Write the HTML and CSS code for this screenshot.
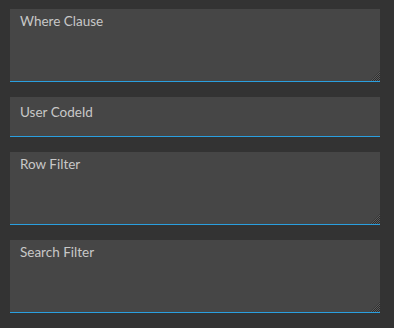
FILE: index.html
```html
<!DOCTYPE html>
<html lang="en">
<head>
    <meta charset="UTF-8">
    <meta name="viewport" content="width=device-width, initial-scale=1.0">
    <title>Filters</title>
    <link rel="stylesheet" href="styles.css">
</head>
<body>
    <div class="form">
        <div class="field area">
            <textarea id="whereClause" placeholder="Where Clause"></textarea>
        </div>
        <div class="field line">
            <input type="text" id="userCodeId" placeholder="User CodeId">
        </div>
        <div class="field area">
            <textarea id="rowFilter" placeholder="Row Filter"></textarea>
        </div>
        <div class="field area">
            <textarea id="searchFilter" placeholder="Search Filter"></textarea>
        </div>
    </div>
</body>
</html>
```

FILE: styles.css
```css
body {
    background-color: #333333;
    font-family: Lato, "Noto Sans", sans-serif;
    margin: 0;
    padding: 9px 14px 0 10px;
}

.form {
    display: flex;
    flex-direction: column;
    gap: 15px;
    width: 370px;
}

.field {
    position: relative;
    background-color: #464646;
    border-bottom: 1px solid #2a9fdf;
}

.field textarea, .field input {
    display: block;
    width: 100%;
    box-sizing: border-box;
    background: transparent;
    border: none;
    outline: none;
    color: #c8c8c8;
    font-family: inherit;
    font-size: 13.5px;
    padding: 4px 10px;
    margin: 0;
}

.field textarea::placeholder, .field input::placeholder {
    color: #c8c8c8;
    opacity: 1;
}

.area textarea {
    height: 72px;
    resize: none;
}

.line input {
    height: 39px;
    padding-top: 5px;
    padding-bottom: 14px;
}

.area::after {
    content: "";
    position: absolute;
    right: 0;
    bottom: 0;
    width: 10px;
    height: 10px;
    background: repeating-conic-gradient(#2c2c2c 0 25%, #5a5a5a 0 50%) 0 0 / 2px 2px;
    clip-path: polygon(100% 0, 100% 100%, 0 100%);
}
```
